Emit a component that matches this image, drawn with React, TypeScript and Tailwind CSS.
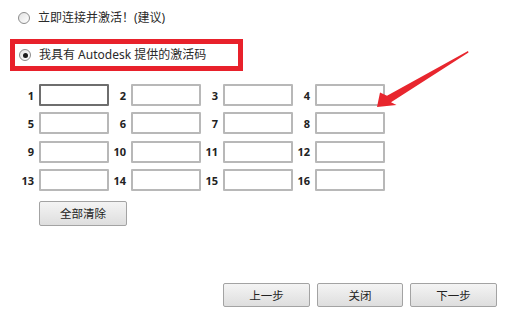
import { useState } from "react";

const FONT = "font-['Noto_Sans','Noto_Sans_CJK_SC',sans-serif]";

function Radio({ checked }: { checked?: boolean }) {
  return (
    <span className="flex h-[12px] w-[12px] shrink-0 items-center justify-center rounded-full border border-[#8c8c8c] bg-gradient-to-br from-[#e2e2e2] to-white">
      {checked && <span className="h-[5px] w-[5px] rounded-full bg-[#1a1a1a]" />}
    </span>
  );
}

function GrayButton({ label, className = "" }: { label: string; className?: string }) {
  return (
    <button
      type="button"
      className={`flex items-center justify-center rounded-[2px] border border-[#a3a3a3] bg-gradient-to-b from-[#f4f4f4] to-[#dedede] text-[11.5px] text-[#222] ${className}`}
    >
      {label}
    </button>
  );
}

export default function App() {
  const [codes, setCodes] = useState<string[]>(Array(16).fill(""));

  return (
    <div className={`relative h-[321px] w-[506px] overflow-hidden bg-white text-[#2a2a2a] ${FONT}`}>
      <div className="mt-[8px] flex h-[20px] items-center pl-[18px]">
        <Radio />
        <span className="ml-[8px] text-[12px] leading-none">立即连接并激活！(建议)</span>
      </div>

      <div className="ml-[10px] mt-[11px] flex h-[32px] w-[233px] items-center border-[5px] border-[#e8212b] pl-[4px]">
        <Radio checked />
        <span className="ml-[8px] text-[12px] leading-none">我具有 Autodesk 提供的激活码</span>
      </div>

      <div className="ml-[17px] mt-[13px] grid w-[368px] grid-cols-4 gap-y-[6.4px]">
        {codes.map((value, i) => (
          <div key={i} className="flex h-[22px] items-center">
            <span className="w-[19px] pr-[2px] text-right text-[11px] font-bold leading-none text-[#222]">
              {i + 1}
            </span>
            <input
              value={value}
              onChange={(e) =>
                setCodes((c) => c.map((v, j) => (j === i ? e.target.value : v)))
              }
              className={`ml-[3px] h-[22px] w-[70px] rounded-[1px] border-2 bg-white outline-none ${
                i === 0 ? "border-[#6e6e6e]" : "border-[#b8b8b8]"
              }`}
            />
          </div>
        ))}
      </div>

      <GrayButton label="全部清除" className="ml-[39px] mt-[10px] h-[25px] w-[88px]" />

      <div className="ml-[223px] mt-[57px] flex gap-[7px]">
        <GrayButton label="上一步" className="h-[24px] w-[87px]" />
        <GrayButton label="关闭" className="h-[24px] w-[86px]" />
        <GrayButton label="下一步" className="h-[24px] w-[87px]" />
      </div>

      <svg className="pointer-events-none absolute left-0 top-0" width="506" height="321">
        <polygon
          points="468,51 387,95.8 380,92.5 377,107 396.5,105 391,102.2 468.5,52.5"
          fill="#e8262e"
        />
      </svg>
    </div>
  );
}
